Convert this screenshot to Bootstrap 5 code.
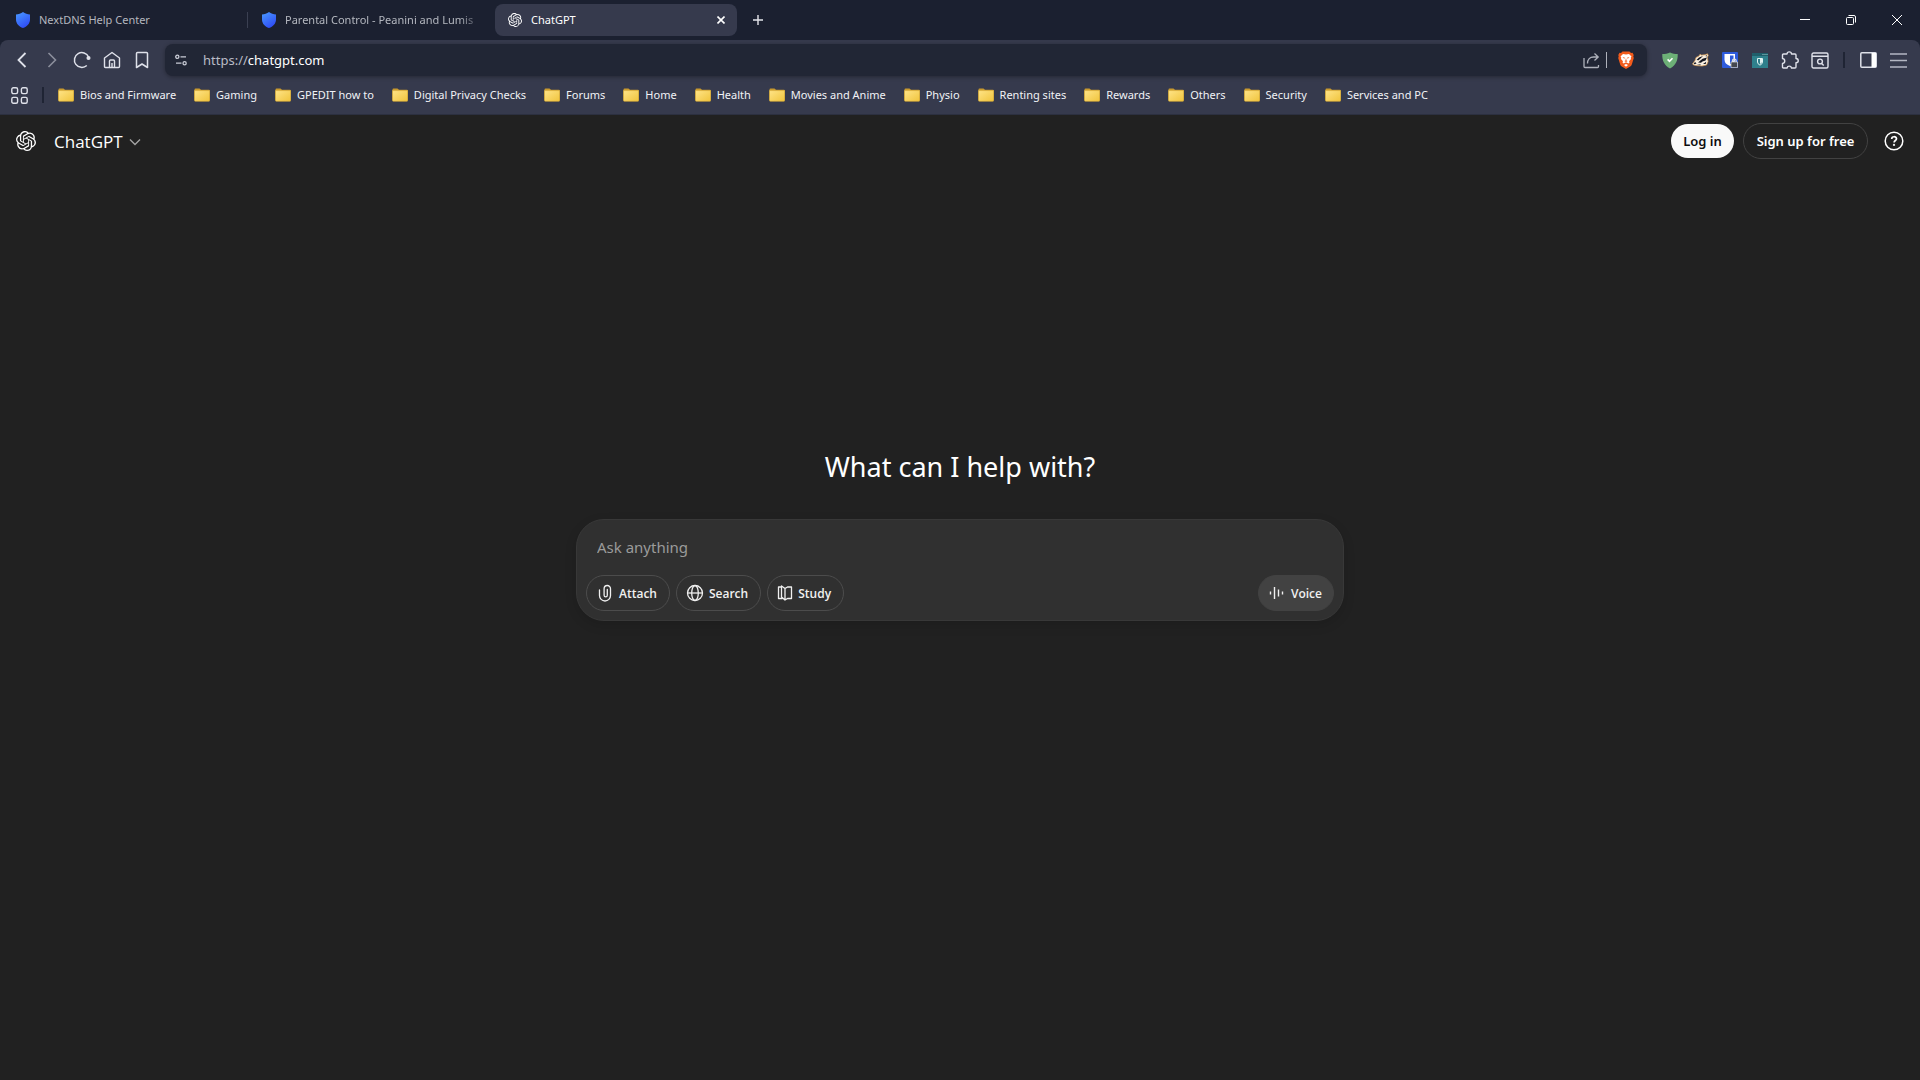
<!DOCTYPE html>
<html lang="en" data-bs-theme="dark">
<head>
<meta charset="utf-8">
<meta name="viewport" content="width=device-width, initial-scale=1">
<title>ChatGPT</title>
<link href="https://cdn.jsdelivr.net/npm/bootstrap@5.3.0/dist/css/bootstrap.min.css" rel="stylesheet">
<style>
body{background:#212121;font-family:"Noto Sans","Open Sans",sans-serif;color:#fff}
button{color:inherit}
svg{display:block;flex:none}
.plain{background:none;border:0;padding:0;display:flex;align-items:center;justify-content:center}
.strip{background:#1b2030;height:40px;padding-left:3px;font-size:11px;color:#b4b7bf}
.tab{width:242px;height:32px;padding:0 8px 0 13px;gap:9px;border-radius:8px;color:inherit;text-decoration:none}
.tab-title{flex:1;overflow:hidden;white-space:nowrap}
.tab-fade{-webkit-mask-image:linear-gradient(90deg,#000 88%,transparent);mask-image:linear-gradient(90deg,#000 88%,transparent)}
.tab-on{background:#363a4d;color:#fff}
.tab-sep{width:4px;height:16px}
.tab-sep.shown{border-left:1px solid #3b4052;margin-left:2px;width:2px}
.win{width:46px;height:40px;color:#fff}
.chrome{background:#1b2030}
.tools{background:#363a4d;border-radius:8px 8px 0 0;border-bottom:1px solid #2c3040;color:#dfe1ea}
.bar{height:36px;padding:4px 7px 0}
.tool{width:30px;height:32px}
.tool.new-tab{margin-left:6px}
.omni{height:32px;background:#212635;border-radius:8px;box-shadow:0 1px 4px #0005;margin:0 8px;padding:0 6px 0 5px}
.site{width:22px}
.url{font-size:13px;color:#b9bcc6;margin-left:11px;padding-top:1px}
.url b{font-weight:400;color:#fff}
.rule{width:2px;height:16px;background:#1f2434}
.hair{width:1px;height:16px;background:#aeb1bb}
.marks{height:38px;padding:0 11px;font-size:11px;gap:18px}
.marks .rule{margin:0 -4px}
.marks a{color:#f1f2f6;text-decoration:none;white-space:nowrap;gap:6px}
.head{height:52px;padding:0 16px}
.brand{font-family:"Open Sans",sans-serif;font-size:17px;gap:6px;margin-left:18px;padding-top:1px}
.pill{height:36px;border-radius:18px;font-size:13px;font-weight:600;display:flex;align-items:center;justify-content:center;white-space:nowrap;padding:1px 0 0}
.login{background:#f9f9f9;color:#0d0d0d;width:63px;height:34px;border:0;margin-right:9px}
.signup{background:#212121;color:#fff;width:125px;border:1px solid #424242}
.hero{padding-top:282px}
.hero h1{font-size:27px;line-height:36px;font-weight:400;margin-bottom:34px}
.composer{max-width:768px;background:#303030;border:1px solid #383838;border-radius:28px;padding:14px 9px 9px;box-shadow:0 4px 12px #0002}
.ask{background:none;border:0;outline:0;color:#fff;font-size:15px;line-height:26px;padding:0 11px;width:100%}
.ask::placeholder{color:#9b9b9b;opacity:1}
.chips{gap:6px;margin-top:15px}
.chip{font-family:"Open Sans",sans-serif;background:none;border:1px solid #4c4c4c;color:#f0f0f0;padding:0 12px 0 9px;gap:5px;font-size:12px}
.chip span{padding-top:2px}
.voice{background:#424242;border-color:#424242;padding-right:11px}
</style>
<script src="https://cdn.jsdelivr.net/npm/bootstrap@5.3.0/dist/js/bootstrap.bundle.min.js"></script>
</head>
<body class="min-vh-100">
<svg width="0" height="0" class="position-absolute" aria-hidden="true">
<defs>
<linearGradient id="blue" x1="0" y1="0" x2=".6" y2="1"><stop offset="0" stop-color="#4a9bff"/><stop offset="1" stop-color="#2f4df5"/></linearGradient>
<linearGradient id="gold" x1="0" y1="0" x2="1" y2="1"><stop offset="0" stop-color="#ffe487"/><stop offset="1" stop-color="#f0c43c"/></linearGradient>
<symbol id="shield" viewBox="0 0 14 16"><path fill="url(#blue)" d="M7 0c2 1.500 4.500 2.200 7 2.400v5C14 11.500 11 14.500 7 16 3 14.500 0 11.500 0 7.400v-5C2.500 2.200 5 1.500 7 0z"/></symbol>
<symbol id="folder" viewBox="0 0 16 14"><path fill="#c99a2e" d="M.5 1.500Q.5.5 1.500.5h4l1.500 1.300h8q.7 0 .7.700V12H.5z"/><path fill="url(#gold)" stroke="#d9ab35" stroke-width=".6" d="M.5 2.600h15.200v9.900q0 .8-.8.800H1.300q-.8 0-.8-.8z"/></symbol>
<symbol id="knot" viewBox="0 0 24 24"><path fill="currentColor" d="M22.2819 9.8211a5.9847 5.9847 0 0 0-.5157-4.9108 6.0462 6.0462 0 0 0-6.5098-2.9A6.0651 6.0651 0 0 0 4.9807 4.1818a5.9847 5.9847 0 0 0-3.9977 2.9 6.0462 6.0462 0 0 0 .7427 7.0966 5.98 5.98 0 0 0 .511 4.9107 6.051 6.051 0 0 0 6.5146 2.9001A5.9847 5.9847 0 0 0 13.2599 24a6.0557 6.0557 0 0 0 5.7718-4.2058 5.9894 5.9894 0 0 0 3.9977-2.9001 6.0557 6.0557 0 0 0-.7475-7.0729zm-9.022 12.6081a4.4755 4.4755 0 0 1-2.8764-1.0408l.1419-.0804 4.7783-2.7582a.7948.7948 0 0 0 .3927-.6813v-6.7369l2.02 1.1686a.071.071 0 0 1 .038.052v5.5826a4.504 4.504 0 0 1-4.4945 4.4944zm-9.6607-4.1254a4.4708 4.4708 0 0 1-.5346-3.0137l.142.0852 4.783 2.7582a.7712.7712 0 0 0 .7806 0l5.8428-3.3685v2.3324a.0804.0804 0 0 1-.0332.0615L9.74 19.9502a4.4992 4.4992 0 0 1-6.1408-1.6464zM2.3408 7.8956a4.485 4.485 0 0 1 2.3655-1.9728V11.6a.7664.7664 0 0 0 .3879.6765l5.8144 3.3543-2.0201 1.1685a.0757.0757 0 0 1-.071 0l-4.8303-2.7865A4.504 4.504 0 0 1 2.3408 7.872zm16.5963 3.8558L13.1038 8.364 15.1192 7.2a.0757.0757 0 0 1 .071 0l4.8303 2.7913a4.4944 4.4944 0 0 1-.6765 8.1042v-5.6772a.79.79 0 0 0-.407-.667zm2.0107-3.0231l-.142-.0852-4.7735-2.7818a.7759.7759 0 0 0-.7854 0L9.409 9.2297V6.8974a.0662.0662 0 0 1 .0284-.0615l4.8303-2.7866a4.4992 4.4992 0 0 1 6.6802 4.66zM8.3065 12.863l-2.02-1.1638a.0804.0804 0 0 1-.038-.0567V6.0742a4.4992 4.4992 0 0 1 7.3757-3.4537l-.142.0805L8.704 5.459a.7948.7948 0 0 0-.3927.6813zm1.0976-2.3654l2.602-1.4998 2.6069 1.4998v2.9994l-2.5974 1.4997-2.6067-1.4997Z"/></symbol>
</defs>
</svg>

<header class="chrome">
<div class="strip d-flex align-items-center">
<a href="#" class="tab d-flex align-items-center"><svg width="14" height="16"><use href="#shield"/></svg><span class="tab-title">NextDNS Help Center</span></a>
<span class="tab-sep shown"></span>
<a href="#" class="tab d-flex align-items-center"><svg width="14" height="16"><use href="#shield"/></svg><span class="tab-title tab-fade">Parental Control - Peanini and Lumis</span></a>
<span class="tab-sep"></span>
<div class="tab tab-on d-flex align-items-center"><svg width="14" height="14"><use href="#knot"/></svg><span class="tab-title">ChatGPT</span>
<button class="plain p-1" aria-label="Close tab"><svg width="8" height="8" viewBox="0 0 8 8" stroke="#fff" stroke-width="1.600"><path d="M.5.5l7 7M7.500.5l-7 7"/></svg></button></div>
<button class="plain tool new-tab" aria-label="New tab"><svg width="10" height="10" viewBox="0 0 10 10" stroke="#e4e5ea" stroke-width="1.400"><path d="M5 0v10M0 5h10"/></svg></button>
<div class="d-flex ms-auto">
<button class="plain win" aria-label="Minimize"><svg width="10" height="10" viewBox="0 0 10 10" stroke="#fff"><path d="M0 4.500h10"/></svg></button>
<button class="plain win" aria-label="Restore"><svg width="10" height="10" viewBox="0 0 10 10" stroke="#fff" fill="none"><rect x=".5" y="2.500" width="7" height="7" rx="1"/><path d="M2.500.5H8Q9.500.5 9.500 2v5.500"/></svg></button>
<button class="plain win" aria-label="Close"><svg width="10" height="10" viewBox="0 0 10 10" stroke="#fff"><path d="M0 0l10 10M10 0L0 10"/></svg></button>
</div>
</div>
<div class="tools">
<div class="bar d-flex align-items-center">
<button class="plain tool" aria-label="Back"><svg width="18" height="18" viewBox="0 0 18 18" fill="none" stroke="currentColor" stroke-width="1.800"><path d="M12.500 2L5.500 9l7 7"/></svg></button>
<button class="plain tool opacity-50" aria-label="Forward"><svg width="18" height="18" viewBox="0 0 18 18" fill="none" stroke="currentColor" stroke-width="1.600"><path d="M5.500 2l7 7-7 7"/></svg></button>
<button class="plain tool" aria-label="Reload"><svg width="18" height="18" viewBox="0 0 18 18" fill="none" stroke="currentColor" stroke-width="1.500"><path d="M13.800 14.500A7.400 7.400 0 1 1 15.600 6"/><circle cx="15.500" cy="7" r="1.300" fill="currentColor"/></svg></button>
<button class="plain tool" aria-label="Home"><svg width="18" height="18" viewBox="0 0 18 18" fill="none" stroke="currentColor" stroke-width="1.400" stroke-linejoin="round"><path d="M1.500 7L9 1.500 16.500 7v8.500q0 1-1 1h-13q-1 0-1-1zM6.500 16V10q0-1 1-1h3q1 0 1 1v6M9 16v-4"/></svg></button>
<button class="plain tool" aria-label="Bookmark this page"><svg width="18" height="18" viewBox="0 0 18 18" fill="none" stroke="currentColor" stroke-width="1.500" stroke-linejoin="round"><path d="M3.500 2.500q0-1 1-1h9q1 0 1 1v14L9 13l-5.500 3.500z"/></svg></button>
<div class="omni d-flex align-items-center flex-grow-1">
<button class="plain site" aria-label="Site settings"><svg width="12" height="12" viewBox="0 0 12 12" fill="none" stroke="#c9ccd6" stroke-width="1.300"><circle cx="2.300" cy="2.800" r="1.600"/><path d="M5.500 2.800H11M1 9.200h5.500"/><circle cx="9.600" cy="9.200" r="1.600"/></svg></button>
<span class="url">https://<b>chatgpt.com</b></span>
<button class="plain tool ms-auto" aria-label="Share"><svg width="17" height="17" viewBox="0 0 17 17" fill="none" stroke="#aeb1bb" stroke-width="1.300"><path d="M1 6v8.500q0 1 1 1h12.500q1 0 1-1V13M4.500 11.500C4.500 7.500 7 5 10.500 5H15M11.500 1.500L15.200 5l-3.700 3.500"/></svg></button>
<span class="hair"></span>
<button class="plain tool ms-1" aria-label="Brave Shields"><svg width="16" height="18" viewBox="0 0 16 18"><path fill="#f25b1c" d="M4.500.5h7L13 2l1.500-.2L15.700 4l-.4 1.500.5 1.500-2 6.500q-.5 1.300-1.600 2L8 18l-4.200-2.500q-1.100-.7-1.600-2L.2 7l.5-1.500L.3 4l1.200-2.200L3 2z"/><path fill="#fff" d="M5 3l3 .6L11 3l2.500 2.500-.8 1.200.3 1.300-2 2.300.5 1.200-1 1-2.500-1.300-2.500 1.300-1-1 .5-1.200L3 8l.3-1.300L2.500 5.500zM8 13l2 1-2 1.700L6 14z"/><path fill="#f25b1c" d="M4.500 6l2.500.8-.8.900zM11.500 6L9 6.800l.8.900zM8 7l.6 2.800L9.700 10 8 11 6.300 10l1.100-.2z"/></svg></button>
</div>
<button class="plain tool" aria-label="Privacy extension"><svg width="16" height="17" viewBox="0 0 16 17"><path fill="#6db077" d="M8 .5c2.500 1 5 1.500 7.700 1.600.3 6-1.700 11.400-7.700 14.400C2 13.500 0 8.100.3 2.100 3 2 5.500 1.500 8 .5z"/><path d="M5.600 7.400l1.900 1.900 3-3" stroke="#fff" stroke-width="1.600" fill="none"/></svg></button>
<button class="plain tool" aria-label="Badger extension"><svg width="17" height="14" viewBox="0 0 17 14"><path fill="#f8eee0" stroke="#d99a4c" stroke-width=".7" d="M.5 10.800L3 7.500 4 4.500 7 3 8 1.300l1.500.8L13 1.800 15.500.8l.8 1.700-1 1.700.8 4.300-1.500 3.500-4.600 1-5-.3-3.500-.7z"/><path fill="#14161f" d="M4.500 7L7 4.600l4-1.500L8.500 5.500l-2 1.700zM6 9.500l4.500-3.700 4.500-1.300-1.500 3-3 1-1.500 1.300zM1.500 10l2-.8 1 1.200-2 .8zM11 11l3.200-2.300-.5 2.300zM13.300 3l1.800-1-.5 1.500zM4.500 12l4-.8v1z"/></svg></button>
<button class="plain tool" aria-label="Password extension"><svg width="16" height="16" viewBox="0 0 16 16"><rect width="16" height="16" rx="1" fill="#2e5bdb"/><path fill="#fff" d="M2.500 2h10.500v5.500q0 4.500-5 6.500-5.500-2-5.500-6.500z"/><path fill="#2e5bdb" d="M8 3.500h3.500v4q0 3-3.500 4.800z"/><path fill="#44474f" stroke="#ddd" stroke-width=".7" d="M9 10h6.500v5.600H9z"/><path fill="none" stroke="#ddd" stroke-width="1.300" d="M10.500 10V8.600q0-1.500 1.800-1.500T14.100 8.600V10"/></svg></button>
<button class="plain tool" aria-label="Browser guard extension"><svg width="16" height="15" viewBox="0 0 16 15"><path fill="#2f808c" d="M0 0h16v15H0z"/><path fill="#205e6b" d="M0 0h16v3H0z"/><path stroke="#9cc" d="M10.500 1.500h1M12.500 1.500h1M14.500 1.500h1"/><path fill="none" stroke="#dff1f2" d="M5.500 5.500h5V9q0 2-2.500 3.200Q5.500 11 5.500 9z"/><path fill="#dff1f2" d="M8 6h2v3q0 1-2 2z"/></svg></button>
<button class="plain tool" aria-label="Extensions"><svg width="18" height="18" viewBox="0 0 18 18" fill="none" stroke="currentColor" stroke-width="1.400" stroke-linejoin="round"><path d="M1.500 4q0-1 1-1H6C6.200.2 10.300.2 10.500 3H14q1 0 1 1v3.500c3 .3 3 4 0 4.200V16q0 1-1 1h-3.500c-.5-2.500-4-2.500-4.500 0H2.500q-1 0-1-1v-3.500c3-.5 3-4.500 0-5z"/></svg></button>
<button class="plain tool" aria-label="Page search"><svg width="18" height="17" viewBox="0 0 18 17" fill="none" stroke="currentColor" stroke-width="1.400"><rect x="1" y="1" width="16" height="15" rx="1.500"/><path d="M1 4.200h16M10.700 11.500l2 2"/><circle cx="9" cy="9.500" r="2.400"/></svg></button>
<span class="rule ms-2"></span>
<button class="plain tool ms-2" aria-label="Sidebar"><svg width="17" height="16" viewBox="0 0 17 16"><rect x=".8" y=".8" width="15.400" height="14.400" rx="1" fill="none" stroke="currentColor" stroke-width="1.500"/><path fill="#fff" d="M11.500 1h4.500v14h-4.500z"/></svg></button>
<button class="plain tool" aria-label="Menu"><svg width="17" height="15" viewBox="0 0 17 15" stroke="#b4b7c3" stroke-width="1.500"><path d="M0 1h17M0 7.500h17M0 14h17"/></svg></button>
</div>
<nav class="marks d-flex align-items-center">
<button class="plain" aria-label="All bookmarks"><svg width="17" height="17" viewBox="0 0 17 17" fill="none" stroke="currentColor" stroke-width="1.400"><rect x=".8" y=".8" width="5.800" height="5.800" rx="1.500"/><rect x="10.400" y=".8" width="5.800" height="5.800" rx="1.500"/><rect x=".8" y="10.400" width="5.800" height="5.800" rx="1.500"/><rect x="10.400" y="10.400" width="5.800" height="5.800" rx="1.500"/></svg></button>
<span class="rule"></span>
<a href="#" class="d-flex align-items-center"><svg width="16" height="14"><use href="#folder"/></svg>Bios and Firmware</a>
<a href="#" class="d-flex align-items-center"><svg width="16" height="14"><use href="#folder"/></svg>Gaming</a>
<a href="#" class="d-flex align-items-center"><svg width="16" height="14"><use href="#folder"/></svg>GPEDIT how to</a>
<a href="#" class="d-flex align-items-center"><svg width="16" height="14"><use href="#folder"/></svg>Digital Privacy Checks</a>
<a href="#" class="d-flex align-items-center"><svg width="16" height="14"><use href="#folder"/></svg>Forums</a>
<a href="#" class="d-flex align-items-center"><svg width="16" height="14"><use href="#folder"/></svg>Home</a>
<a href="#" class="d-flex align-items-center"><svg width="16" height="14"><use href="#folder"/></svg>Health</a>
<a href="#" class="d-flex align-items-center"><svg width="16" height="14"><use href="#folder"/></svg>Movies and Anime</a>
<a href="#" class="d-flex align-items-center"><svg width="16" height="14"><use href="#folder"/></svg>Physio</a>
<a href="#" class="d-flex align-items-center"><svg width="16" height="14"><use href="#folder"/></svg>Renting sites</a>
<a href="#" class="d-flex align-items-center"><svg width="16" height="14"><use href="#folder"/></svg>Rewards</a>
<a href="#" class="d-flex align-items-center"><svg width="16" height="14"><use href="#folder"/></svg>Others</a>
<a href="#" class="d-flex align-items-center"><svg width="16" height="14"><use href="#folder"/></svg>Security</a>
<a href="#" class="d-flex align-items-center"><svg width="16" height="14"><use href="#folder"/></svg>Services and PC</a>
</nav>
</div>
</header>

<div class="head d-flex align-items-center">
<svg width="20" height="20"><use href="#knot"/></svg>
<button class="plain brand">ChatGPT <svg width="12" height="8" viewBox="0 0 12 8" fill="none" stroke="#a3a3a3" stroke-width="1.400"><path d="M1 1.500l5 5 5-5"/></svg></button>
<div class="d-flex align-items-center ms-auto">
<button class="pill login">Log in</button>
<button class="pill signup">Sign up for free</button>
<button class="plain ms-3" aria-label="Help"><svg width="20" height="20" viewBox="0 0 20 20" fill="none" stroke="#fff" stroke-width="1.500"><circle cx="10" cy="10" r="8.800"/><path stroke-width="1.700" d="M7.700 8c0-3 4.800-3 4.800-.2 0 1.700-2.400 1.700-2.400 3.600"/><circle cx="10" cy="13.900" r=".4"/></svg></button>
</div>
</div>

<main class="hero">
<h1 class="text-center">What can I help with?</h1>
<form class="composer mx-auto">
<input class="ask d-block" type="text" placeholder="Ask anything" aria-label="Ask anything">
<div class="chips d-flex">
<button type="button" class="pill chip"><svg width="18" height="18" viewBox="0 0 18 18" fill="none" stroke="currentColor" stroke-width="1.300" stroke-linecap="round"><path d="M3.500 6v5.500a5.500 5.500 0 0 0 11 0V4.700a3.200 3.200 0 0 0-6.400 0v6.500a1.600 1.600 0 0 0 3.200 0V5.500"/></svg><span>Attach</span></button>
<button type="button" class="pill chip"><svg width="18" height="18" viewBox="0 0 18 18" fill="none" stroke="currentColor" stroke-width="1.300"><circle cx="9" cy="9" r="7.500"/><ellipse cx="9" cy="9" rx="3.300" ry="7.500"/><path d="M1.500 9h15"/></svg><span>Search</span></button>
<button type="button" class="pill chip"><svg width="16" height="18" viewBox="0 0 16 18" fill="none" stroke="currentColor" stroke-width="1.300" stroke-linejoin="round"><path d="M8 4.500V16M8 4.500L4.500 2v11L8 16l2.500-1.500h4V3h-4zM4.500 3h-3v11.500h4"/></svg><span>Study</span></button>
<button type="button" class="pill chip voice ms-auto"><svg width="18" height="18" viewBox="0 0 18 18" stroke="currentColor" stroke-width="1.400"><path d="M2.500 7.500v3M6.500 3v12M10.500 5.500v7M14.500 7.500v3"/></svg><span>Voice</span></button>
</div>
</form>
</main>
</body>
</html>
